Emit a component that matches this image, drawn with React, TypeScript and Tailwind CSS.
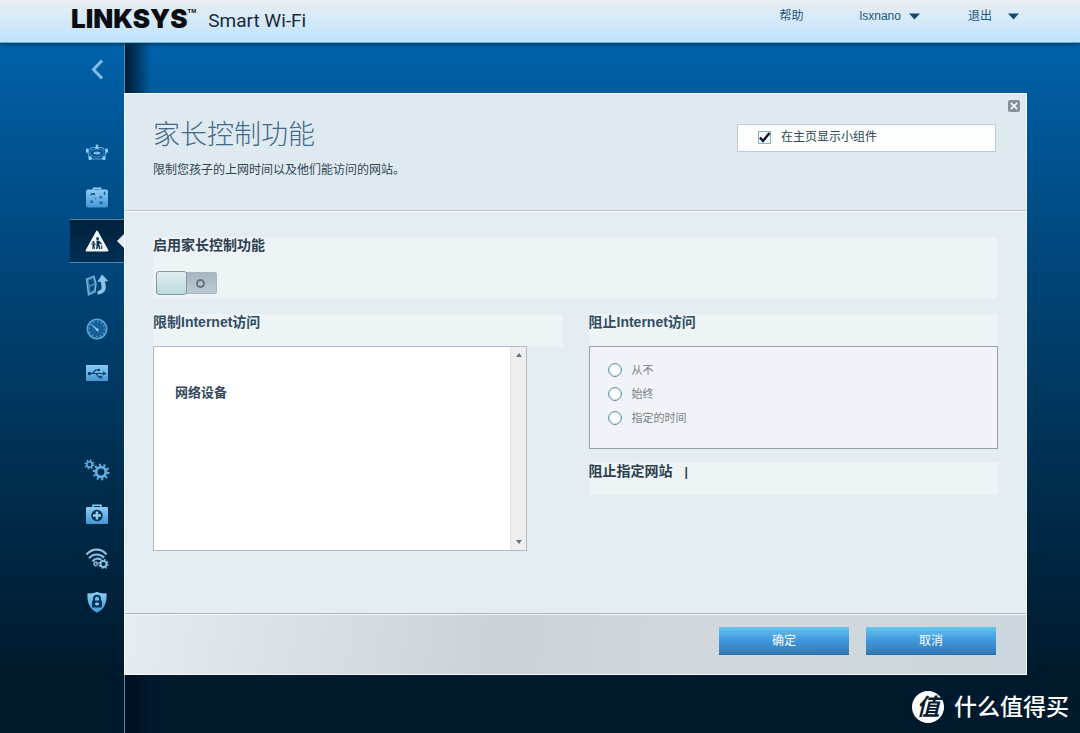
import { useState, type ReactNode } from "react";

const ICONS: Record<string, ReactNode> = {
  map: (
    <svg viewBox="0 0 24 24" className="size-6" fill="none" stroke="#5ba6d8" strokeWidth="1.200">
      <path d="M4.500 8.500 7 6.500h10l2.500 2M3 11l1 4.500 3 2.500h10l3-2.500 1-4.500" />
      <ellipse cx="12" cy="12" rx="7" ry="3.800" stroke="#2f7fb9" />
      <ellipse cx="12" cy="12" rx="3.500" ry="1.500" fill="#7cc0ea" stroke="none" />
      <g fill="#8fd0f5" stroke="none">
        <circle cx="12" cy="5" r="1.400" />
        <rect x="10.300" y="6" width="3.400" height="1.800" />
        <rect x="1" y="7.500" width="2.800" height="4.200" rx="1.200" />
        <rect x="20.200" y="7.500" width="2.800" height="4.200" rx="1.200" />
        <rect x="3.500" y="15.300" width="3.200" height="3.700" rx="1.200" />
        <rect x="17.300" y="15.300" width="3.200" height="3.700" rx="1.200" />
      </g>
    </svg>
  ),
  guest: (
    <svg viewBox="0 0 24 24" className="size-6">
      <path d="M8.500 5V3.200h7V5" fill="none" stroke="#8fd0f5" strokeWidth="1.500" />
      <rect x="1" y="4.500" width="22" height="18" rx="2" fill="url(#ice)" />
      <g fill="#1d629b">
        <path d="M5 9.500l2-1.500h3v2H7l-1 .8zM5.500 15.500H8V18H5.500zM14.500 16.500h3V19h-3z" />
        <path d="M14 12l2-1 1.500 1-1 1.200h-2zM18.500 7.500l2-1.500-.3 4h-1.200zM10 12.500l1.500 1-1 1z" />
      </g>
    </svg>
  ),
  parental: (
    <svg viewBox="0 0 24 24" className="size-6">
      <path d="M12 2.500 22.500 21.500h-21z" fill="#f2f7fa" stroke="#f2f7fa" strokeWidth="1.800" strokeLinejoin="round" />
      <g fill="#002b4d">
        <circle cx="12.600" cy="9.700" r="1.400" />
        <path d="M11.500 11.500h2.300l3.200 3.300-.8.800-2-1.600.3 1.800 1 4.200h-1.500l-1-3.500-.6 3.500h-1.300l.5-5z" />
        <circle cx="8.400" cy="13.200" r="1.100" />
        <path d="M6.300 14.500h4.500v1H9.500l.4 4.500H9l-.4-2.500-.3 2.500h-1l.3-4.500H6.300z" />
        <path d="M16.200 16.500h1V20h-1z" />
      </g>
    </svg>
  ),
  media: (
    <svg viewBox="0 0 24 24" className="size-6">
      <path d="M1.500 6 9 3l2 8-1 8-6.500 3z" fill="#4385b3" stroke="#79b8dd" strokeWidth="1.300" strokeLinejoin="round" />
      <path d="M3.500 7.500 8 5.800l1 4.500-4.500 1.800zM4.700 14l4.500-1.700-.4 4.700-3.600 1.700z" fill="#0b487a" />
      <path d="M12.500 21.500c6-.3 9-4 8.200-9l-.7-4 3.300-.5L17 1.500 12.200 9l3.500-.5.8 4.500c.6 3.300-1 4.500-4 5z" fill="#8cc5e8" />
    </svg>
  ),
  speed: (
    <svg viewBox="0 0 24 24" className="size-6">
      <circle cx="12" cy="12" r="9.700" fill="#176097" stroke="#5ca6d8" strokeWidth="1.600" />
      <circle cx="12" cy="12" r="7.500" fill="none" stroke="#5ca6d8" strokeWidth="1.500" strokeDasharray="1 2.927" />
      <path d="M6.500 7.500l6.500 5-1 1z" fill="#9dd0f2" stroke="#9dd0f2" strokeWidth=".6" />
      <circle cx="12.500" cy="13" r="1.200" fill="#9dd0f2" />
    </svg>
  ),
  usb: (
    <svg viewBox="0 0 24 24" className="size-6">
      <rect x="1" y="4" width="22" height="16" fill="url(#ice)" />
      <g fill="none" stroke="#0a3f6d" strokeWidth="1.200">
        <path d="M4 12.500h15M7.500 12.500l3-3.500h3M11 12.500l2.500 3.500h2" />
      </g>
      <g fill="#0a3f6d">
        <circle cx="4.500" cy="12.500" r="1.700" />
        <circle cx="13.800" cy="9" r="1.300" />
        <rect x="14.500" y="14.800" width="2.600" height="2.400" />
        <path d="M18 10.500l3.500 2-3.500 2z" />
      </g>
    </svg>
  ),
  gears: (
    <svg viewBox="0 0 24 24" className="size-6 overflow-visible" fill="none" stroke="#63afe3">
      <circle cx="16" cy="14" r="4.800" strokeWidth="2.800" />
      <circle cx="16" cy="14" r="7.200" strokeWidth="2.400" strokeDasharray="2 2.524" />
      <circle cx="4.500" cy="6.500" r="2.700" strokeWidth="1.600" />
      <circle cx="4.500" cy="6.500" r="4.200" strokeWidth="1.600" strokeDasharray="1.600 1.699" />
    </svg>
  ),
  aid: (
    <svg viewBox="0 0 24 24" className="size-6">
      <path d="M8 5.500V3.300h8v2.200" fill="none" stroke="#8fd0f5" strokeWidth="1.500" />
      <rect x="1" y="5" width="22" height="17" rx="1" fill="url(#ice)" />
      <circle cx="12" cy="13.500" r="5.700" fill="#073254" />
      <path d="M12 9.500v8M8 13.500h8" stroke="#8fcdf2" strokeWidth="2.600" />
    </svg>
  ),
  wifi: (
    <svg viewBox="0 0 24 24" className="size-6 overflow-visible" fill="none" stroke="#8bbfe2">
      <path d="M1.500 8.500C7 2 16.500 2 21.500 8.500M4 12.300c4-5 11-5 15.200-.5M7.500 15.500c2.200-3 6-3.500 8.500-2" strokeWidth="2.100" />
      <circle cx="18.500" cy="18" r="3" strokeWidth="1.800" />
      <circle cx="18.500" cy="18" r="4.400" strokeWidth="1.300" strokeDasharray="1.700 1.756" />
      <circle cx="10.800" cy="17.800" r="1.500" strokeWidth="1.300" />
      <circle cx="10.800" cy="17.800" r="2.500" strokeWidth="1" strokeDasharray="1 .963" />
    </svg>
  ),
  security: (
    <svg viewBox="0 0 24 24" className="size-6">
      <path d="M2.500 3.300c3.500.5 7-.3 9.500-1.600 2.500 1.300 6 2.100 9.500 1.600.7 9-2 16-9.500 19.500C4.500 19.300 1.800 12.300 2.500 3.300z" fill="url(#ice)" />
      <path d="M9 11V8.800a3 3 0 0 1 6 0V11" fill="none" stroke="#06345a" strokeWidth="2" />
      <rect x="7" y="10.500" width="10" height="7" rx="1" fill="#06345a" />
      <ellipse cx="12" cy="14" rx="2" ry="1.400" fill="#8fcdf2" />
    </svg>
  ),
};

const APPS = [
  { id: "map", label: "网络图" },
  { id: "guest", label: "访客访问" },
  { id: "parental", label: "家长控制功能" },
  { id: "media", label: "媒体优先级" },
  { id: "speed", label: "速度测试" },
  { id: "usb", label: "USB 存储" },
];

const SETTINGS = [
  { id: "gears", label: "连接" },
  { id: "aid", label: "故障排除" },
  { id: "wifi", label: "无线" },
  { id: "security", label: "安全" },
];

const BLOCK_MODES = [
  { id: "never", label: "从不" },
  { id: "always", label: "始终" },
  { id: "schedule", label: "指定的时间" },
];

function Caret() {
  return (
    <svg viewBox="0 0 11 7" className="h-[7px] w-[11px]" fill="#134a73">
      <path d="M0 .5h11L5.500 6.500z" />
    </svg>
  );
}

function RailItem({ id, label }: { id: string; label: string }) {
  const active = id === "parental";
  return (
    <a
      href={`#${id}`}
      aria-label={label}
      className={`relative flex h-11 w-[54px] items-center justify-center ${active ? "border-y border-[#5685a6] bg-linear-to-b from-[#00213b] to-[#002f54]" : ""}`}
    >
      {ICONS[id]}
      {active && (
        <svg viewBox="0 0 7 14" className="absolute right-0 h-[14px] w-[7px]" fill="#e4ecf0">
          <path d="M7 0v14L0 7z" />
        </svg>
      )}
    </a>
  );
}

export default function App() {
  const [widget, setWidget] = useState(true);
  const [enabled, setEnabled] = useState(false);
  const [mode, setMode] = useState("");

  return (
    <div className="relative flex min-h-screen flex-col bg-[#001a2d] font-['Liberation_Sans','Noto_Sans_CJK_SC',sans-serif] text-xs text-[#2f4554]">
      <svg className="absolute size-0" aria-hidden="true">
        <linearGradient id="ice" x1="0" y1="0" x2="0" y2="1">
          <stop offset="0" stopColor="#8ccdf4" />
          <stop offset="1" stopColor="#4596d4" />
        </linearGradient>
      </svg>

      <header className="z-10 flex h-[43px] shrink-0 items-start justify-between border-b border-[#6cb3cf] bg-linear-to-b from-[#e9eef2] to-[#bfe4ff] pr-[61px] pl-[71px] shadow-[0_1px_4px_#00345c]">
        <div className="flex items-center pt-1">
          <span className="font-['Inter'] text-[26px] leading-[30px] font-black text-[#0b0d10]">LINKSYS</span>
          <span className="mb-4 text-[6px] leading-2 font-bold text-[#0b0d10]">TM</span>
          <span className="ml-3 pt-1 font-['Roboto'] text-[19px] leading-[26px] text-[#1c2a35]">Smart Wi-Fi</span>
        </div>
        <nav className="flex h-8 items-center text-[#1f567f]">
          <a href="#help">帮助</a>
          <button className="ml-14 flex items-center gap-2">
            lsxnano
            <Caret />
          </button>
          <button className="ml-12 flex items-center gap-4">
            退出
            <Caret />
          </button>
        </nav>
      </header>

      <div className="flex flex-1 bg-linear-to-b from-[#0061a9] to-[#001a2d] to-90%">
        <aside className="flex w-[124px] shrink-0 flex-col items-end">
          <button aria-label="返回" className="flex h-[52px] w-[54px] items-center justify-center">
            <svg viewBox="0 0 12 21" className="h-[21px] w-3" fill="none" stroke="#7dbde6" strokeWidth="3">
              <path d="M11 1.500 2.500 10.500 11 19.500" />
            </svg>
          </button>
          <nav className="mt-9 flex flex-col">
            {APPS.map(item => <RailItem key={item.id} {...item} />)}
          </nav>
          <nav className="mt-[53px] flex flex-col">
            {SETTINGS.map(item => <RailItem key={item.id} {...item} />)}
          </nav>
        </aside>

        <main className="flex min-w-0 flex-1 flex-col border-l border-[#5d8cae] bg-[linear-gradient(to_right,#000c18cc_0,#000c1888_10px,transparent_26px)] pt-[50px] pr-[53px] pb-[59px]">
          <section className="relative -ml-px flex flex-1 flex-col border border-[#f3f8fa] bg-[#e4edf1]">
            <button aria-label="关闭" className="absolute top-[6px] right-[6px] flex size-3 items-center justify-center rounded-xs bg-[#81909c]">
              <svg viewBox="0 0 10 10" className="size-2" stroke="#f3f7fa" strokeWidth="2.200">
                <path d="M1 1l8 8M9 1L1 9" />
              </svg>
            </button>

            {/* Title */}
            <div className="flex h-[117px] items-start justify-between border-b border-[#b5c2ca] bg-[#dfe9f0] pr-[30px] pl-7">
              <div className="pt-[23px]">
                <h1 className="text-[27px] leading-9 font-light text-[#426a89]">家长控制功能</h1>
                <p className="mt-2 leading-[18px]">限制您孩子的上网时间以及他们能访问的网站。</p>
              </div>
              <label className="mt-[30px] flex h-7 w-[259px] items-center gap-[10px] border border-[#bccbd3] bg-[#fcfdfd] pb-[2px] pl-5">
                <span className="relative flex size-[13px]">
                  <input
                    type="checkbox"
                    checked={widget}
                    onChange={e => setWidget(e.target.checked)}
                    className="size-[13px] appearance-none border border-[#8fb0c3] bg-[#f0f7fa]"
                  />
                  {widget && (
                    <svg viewBox="0 0 13 13" className="pointer-events-none absolute inset-0" fill="none" stroke="#0c1015" strokeWidth="2.400">
                      <path d="M2 6.500 5 10 11.500 2" />
                    </svg>
                  )}
                </span>
                在主页显示小组件
              </label>
            </div>

            {/* Settings */}
            <div className="flex-1 border-t border-white px-7 pt-[25px] pb-[62px]">
              <div className="h-[62px] bg-[#eef3f6]">
                <h2 className="text-sm leading-4 font-bold text-[#2c3f4e]">启用家长控制功能</h2>
                <label className="relative mt-[18px] ml-[3px] flex h-6 w-[61px] items-center">
                  <input
                    type="checkbox"
                    role="switch"
                    aria-label="启用家长控制功能"
                    checked={enabled}
                    onChange={e => setEnabled(e.target.checked)}
                    className="peer h-[22px] w-full appearance-none rounded-xs border border-[#a9b8c0] bg-linear-to-b from-[#a6b5be] to-[#bccad2]"
                  />
                  <span className="absolute top-0 left-0 h-6 w-[31px] rounded-[3px] border border-[#8798a2] bg-linear-to-b from-[#e1eef1] to-[#bcd9de] peer-checked:left-[30px]" />
                  <span className="absolute right-3 size-[9px] rounded-full border-2 border-[#63737f] peer-checked:right-10" />
                </label>
              </div>

              <div className="mt-[15px] grid grid-cols-2 gap-x-[26px]">
                <div>
                  <h2 className="h-8 bg-[#eef3f6] text-sm leading-4 font-bold text-[#314e62]">限制Internet访问</h2>
                  <div className="flex h-[205px] max-w-[374px] border border-[#aebcc4] bg-white">
                    <div className="flex-1 px-[21px] pt-9">
                      <h3 className="text-[13px] leading-5 font-bold text-[#33495a]">网络设备</h3>
                    </div>
                    <div className="flex w-4 flex-col items-center justify-between border-l border-[#e4e4e4] bg-[#eeeeee] py-[6px]">
                      <svg viewBox="0 0 6 4" className="h-1 w-[6px]" fill="#68737b">
                        <path d="M0 4h6L3 0z" />
                      </svg>
                      <svg viewBox="0 0 6 4" className="h-1 w-[6px]" fill="#68737b">
                        <path d="M0 0h6L3 4z" />
                      </svg>
                    </div>
                  </div>
                </div>

                <div>
                  <h2 className="h-8 bg-[#eef3f6] text-sm leading-4 font-bold text-[#314e62]">阻止Internet访问</h2>
                  <div className="h-[103px] border border-[#98a2aa] bg-[#f0f4f8] px-[18px] py-[11px]">
                    {BLOCK_MODES.map(m => (
                      <label key={m.id} className="flex h-6 items-center gap-[10px] text-[11px] text-[#777f85]">
                        <input
                          type="radio"
                          name="block"
                          checked={mode === m.id}
                          onChange={() => setMode(m.id)}
                          className="size-[14px] appearance-none rounded-full border border-[#6e93a8] bg-[#fcfeff] shadow-[inset_0_0_2px_#8fc0dc] checked:bg-[#2f87c7]"
                        />
                        {m.label}
                      </label>
                    ))}
                  </div>
                  <h2 className="mt-[14px] flex h-8 gap-3 bg-[#eef3f6] text-sm leading-4 font-bold text-[#2c3f4e]">
                    阻止指定网站
                    <span className="text-xs leading-[18px]">|</span>
                  </h2>
                </div>
              </div>
            </div>

            {/* Actions */}
            <div className="flex h-[61px] items-start justify-end gap-[17px] border-t border-[#a9b5bd] bg-[linear-gradient(100deg,#e5edf1_0%,#ccd1d5_42%,#d2d8dc_62%,#cbd7dd_100%)] pt-[13px] pr-[30px] shadow-[inset_0_1px_#f5f8fa]">
              <button className="h-7 w-[130px] border-b border-[#2b6ca3] bg-linear-to-b from-[#66c4ee] via-[#3f98dc] to-[#3579b3] text-white">确定</button>
              <button className="h-7 w-[130px] border-b border-[#2b6ca3] bg-linear-to-b from-[#66c4ee] via-[#3f98dc] to-[#3579b3] text-white">取消</button>
            </div>
          </section>
        </main>
      </div>

      {/* Site mark */}
      <div className="absolute right-[11px] bottom-[11px] flex items-center gap-[10px] text-white">
        <span className="flex size-8 items-center justify-center rounded-full bg-white text-[23px] leading-8 font-bold text-[#071c2e] italic">值</span>
        <span className="text-[23px] leading-8 font-medium">什么值得买</span>
      </div>
    </div>
  );
}
